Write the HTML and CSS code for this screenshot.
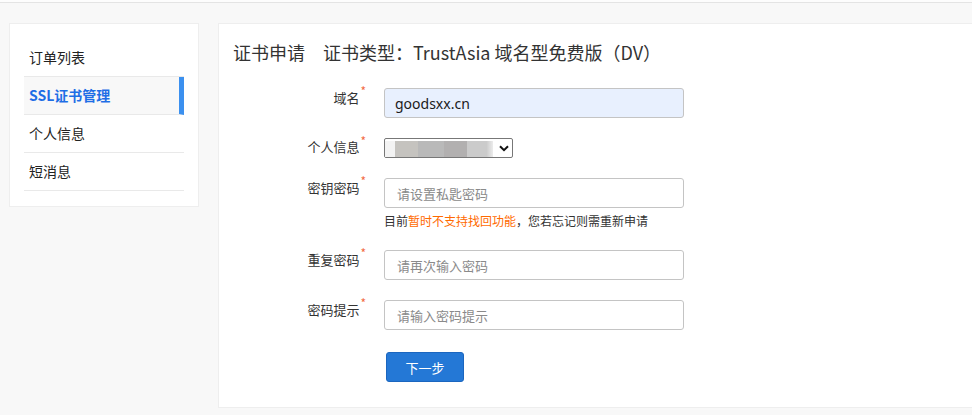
FILE: index.html
```html
<!DOCTYPE html>
<html lang="zh-CN">
<head>
<meta charset="utf-8">
<title>SSL证书管理</title>
<link rel="stylesheet" href="styles.css">
</head>
<body>
<div class="topbar"></div>
<div class="wrap">
  <aside class="side">
    <ul class="menu">
      <li class="menu-item">订单列表</li>
      <li class="menu-item active">SSL证书管理</li>
      <li class="menu-item">个人信息</li>
      <li class="menu-item">短消息</li>
    </ul>
  </aside>
  <main class="main">
    <h1 class="title">证书申请　证书类型：TrustAsia 域名型免费版（DV）</h1>
    <form class="form">
      <div class="row">
        <label class="label">域名<sup class="req">*</sup></label>
        <div class="field"><input class="input filled" type="text" value="goodsxx.cn"></div>
      </div>
      <div class="row row-select">
        <label class="label">个人信息<sup class="req">*</sup></label>
        <div class="field">
          <div class="select">
            <span class="blur">
              <span class="blk b0"></span><span class="blk b1"></span><span class="blk b2"></span><span class="blk b3"></span><span class="blk b4"></span>
            </span>
            <svg class="chev" width="10" height="7" viewBox="0 0 10 7"><path d="M1 1.2 L5 5.2 L9 1.2" fill="none" stroke="#111" stroke-width="2"/></svg>
          </div>
        </div>
      </div>
      <div class="row row-pw">
        <label class="label">密钥密码<sup class="req">*</sup></label>
        <div class="field">
          <input class="input" type="password" placeholder="请设置私匙密码">
          <p class="tip">目前<span class="warn">暂时不支持找回功能</span>，您若忘记则需重新申请</p>
        </div>
      </div>
      <div class="row">
        <label class="label">重复密码<sup class="req">*</sup></label>
        <div class="field"><input class="input" type="password" placeholder="请再次输入密码"></div>
      </div>
      <div class="row">
        <label class="label">密码提示<sup class="req">*</sup></label>
        <div class="field"><input class="input" type="text" placeholder="请输入密码提示"></div>
      </div>
      <div class="row row-btn">
        <span class="label"></span>
        <div class="field"><button class="btn" type="button">下一步</button></div>
      </div>
    </form>
  </main>
</div>
</body>
</html>
```

FILE: styles.css
```css
* { box-sizing: border-box; }
html, body { margin: 0; padding: 0; }
body {
  background: #f8f8f8;
  font-family: "Noto Sans", "Noto Sans CJK SC", sans-serif;
  color: #333;
  overflow: hidden;
  width: 972px;
  height: 415px;
}
.topbar {
  height: 3px;
  background: #fdfdfd;
  border-bottom: 1px solid #e4e4e4;
}
.wrap {
  display: flex;
  align-items: flex-start;
  padding: 20px 0 0 9px;
  gap: 19px;
}
.side {
  width: 190px;
  flex: none;
  background: #fff;
  border: 1px solid #eeeeee;
  padding: 15px 14px 15px 14px;
}
.menu { list-style: none; margin: 0; padding: 0; }
.menu-item {
  height: 38px;
  line-height: 37px;
  padding-left: 5px;
  font-size: 14px;
  color: #222;
  border-bottom: 1px solid #e9e9e9;
  font-family: "Noto Sans CJK SC", sans-serif;
}
.menu-item.active {
  background: #f8f8f8;
  color: #1e6ee6;
  font-weight: bold;
  border-right: 5px solid #3b90ef;
}
.main {
  flex: none;
  width: 780px;
  height: 385px;
  background: #fff;
  border: 1px solid #eeeeee;
  padding: 16px 14px;
}
.title {
  margin: 0 0 24px 0;
  font-size: 18px;
  font-weight: normal;
  line-height: 24px;
  color: #333;
  font-family: "Noto Sans CJK SC", sans-serif;
}
.form { margin: 0; }
.row { display: flex; margin-bottom: 20px; }
.label {
  width: 133px;
  flex: none;
  text-align: right;
  font-size: 13px;
  line-height: 20px;
  color: #333;
  margin-right: 18px;
  font-family: "Noto Sans CJK SC", sans-serif;
}
.req {
  color: #f26b45;
  font-size: 12px;
  vertical-align: top;
  line-height: 12px;
  position: relative;
  top: -3px;
  margin-left: 1px;
}
.field { width: 300px; }
.input {
  display: block;
  width: 300px;
  height: 30px;
  border: 1px solid #c4c4c4;
  border-radius: 3px;
  padding: 0 12px;
  font-size: 13px;
  font-family: "Noto Sans CJK SC", sans-serif;
  color: #222;
  background: #fff;
  outline: none;
}
.input::placeholder { color: #8a8a8a; }
.input.filled {
  background: #e8f0fe;
  font-size: 14px;
  padding-left: 10px;
  font-family: "Noto Sans", sans-serif;
  color: #1a1a1a;
}
.row-select .label { line-height: 18px; }
.select {
  width: 129px;
  height: 20px;
  border: 1px solid #777;
  border-radius: 2px;
  display: flex;
  align-items: center;
  justify-content: space-between;
  padding: 0 3px 0 0;
  background: #fff;
}
.blur { display: flex; height: 16px; margin-top: 2px; }
.blk { height: 16px; display: block; }
.b0 { width: 10px; background: #f3f3f3; }
.b1 { width: 23px; background: #c5c3bf; }
.b2 { width: 26px; background: #b9b9b9; }
.b3 { width: 23px; background: #b2b0b0; }
.b4 { width: 26px; background: linear-gradient(90deg, #cbcbcb 0, #cbcbcb 75%, #ececec 100%); }
.chev { display: block; margin-top: 1px; }
.tip {
  margin: 4px 0 0 0;
  font-size: 12px;
  line-height: 18px;
  color: #333;
  font-family: "Noto Sans CJK SC", sans-serif;
}
.warn { color: #ff6a00; }
.row-btn { margin-top: 22px; }
.btn {
  margin-left: 2px;
  width: 78px;
  height: 30px;
  background: #2478d6;
  border: 1px solid #1b66bf;
  border-radius: 3px;
  color: #fff;
  font-size: 13px;
  font-family: "Noto Sans CJK SC", sans-serif;
  padding: 0;
  cursor: pointer;
}
```
